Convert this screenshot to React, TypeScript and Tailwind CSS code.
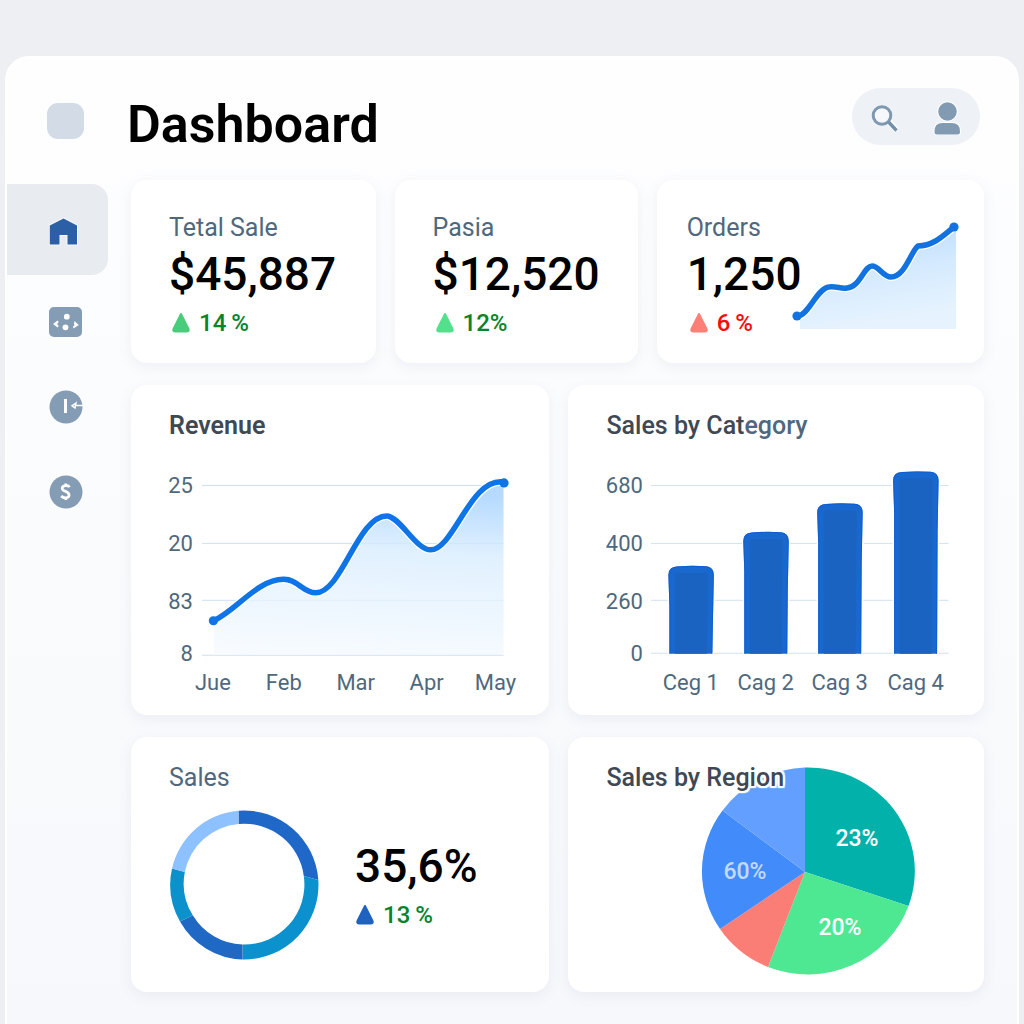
import type { ReactNode } from "react";

const CARD =
  "rounded-2xl bg-white shadow-[0_4px_14px_rgba(100,116,160,0.09)]";

function Triangle({ className }: { className: string }) {
  return (
    <svg viewBox="0 0 20 20" className={"size-5 shrink-0 " + className} aria-hidden="true">
      <path
        d="M10 1 L17.4 15.6 Q18.6 18.5 15.6 18.5 H4.4 Q1.4 18.5 2.6 15.6 Z"
        fill="currentColor"
        stroke="currentColor"
        strokeWidth="2"
        strokeLinejoin="round"
      />
    </svg>
  );
}

function Change({ value, text, marker }: { value: string; text: string; marker: string }) {
  return (
    <p className={"flex items-center gap-2 text-2xl leading-8 font-medium " + text}>
      <Triangle className={marker} />
      {value}
    </p>
  );
}

function Kpi({
  label,
  value,
  change,
  text,
  marker,
  pad,
  children,
}: {
  label: string;
  value: string;
  change: string;
  text: string;
  marker: string;
  pad: string;
  children?: ReactNode;
}) {
  return (
    <section className={CARD + " grid pt-8 pb-6 " + pad}>
      <div className="col-start-1 row-start-1">
        <h2 className="text-[25px] leading-8 text-[#4f687d]">{label}</h2>
        <p className="mt-0.5 text-[46px] leading-[56px] font-medium text-black">{value}</p>
        <div className="mt-[5px] pl-0.5">
          <Change value={change} text={text} marker={marker} />
        </div>
      </div>
      {children}
    </section>
  );
}

function OrdersSpark() {
  const line =
    "M7 96 C17 98 27 68 39 67 C46 66 51 69 57 68 C70 67 74 46 82 46 C89 46 93 57 101 57 C115 57 121 31 128 26 C144 26 155 14 164 7";
  return (
    <svg
      viewBox="0 0 170 110"
      className="col-start-1 row-start-1 mt-2 w-[170px] self-start justify-self-end"
      role="img"
      aria-label="Orders trend"
    >
      <defs>
        <linearGradient id="spark" x1="0" y1="0" x2="0.25" y2="1">
          <stop offset="0" stopColor="#b5d9fe" />
          <stop offset="0.55" stopColor="#d5eafe" />
          <stop offset="1" stopColor="#e6f3fe" />
        </linearGradient>
      </defs>
      <path d={line + " L166 7 V109 H10 V96 Z"} fill="url(#spark)" />
      <path d={line} fill="none" stroke="#fff" strokeWidth="8" />
      <path d={line} fill="none" stroke="#1272df" strokeWidth="5.5" strokeLinecap="round" />
      <circle cx="7" cy="96" r="4.6" fill="#1272df" />
      <circle cx="164" cy="7" r="4.6" fill="#1272df" />
    </svg>
  );
}

const ROWS = [43.5, 101.5, 158.5];

function RevenueChart() {
  const line =
    "M82.5 179 C104 170 127 137 153 137.5 C167 137.5 172 151 185 151 C211 151 227 74 256 74 C269 74 285 108 300 108 C323 108 340 35 373 40";
  const values = ["25", "20", "83", "8"];
  const baselines = [51, 109, 167, 219];
  const months: [string, number][] = [
    ["Jue", 82],
    ["Feb", 153],
    ["Mar", 225],
    ["Apr", 296],
    ["May", 365],
  ];
  return (
    <svg viewBox="0 0 419 273" className="w-full" role="img" aria-label="Revenue by month">
      <defs>
        <linearGradient id="revenue" x1="0.1" y1="0" x2="0" y2="1">
          <stop offset="0" stopColor="#a9d4ff" stopOpacity="0.85" />
          <stop offset="0.35" stopColor="#d9edfe" stopOpacity="0.8" />
          <stop offset="1" stopColor="#f5faff" stopOpacity="0.7" />
        </linearGradient>
      </defs>
      {[...ROWS, 213.5].map((y) => (
        <line key={y} x1="71" x2="373" y1={y} y2={y} stroke="#cfe0ee" />
      ))}
      <path d={line + " V213 H83 Z"} fill="url(#revenue)" />
      <path d={line} fill="none" stroke="#fff" strokeWidth="8" />
      <path d={line} fill="none" stroke="#0f74e5" strokeWidth="5.5" strokeLinecap="round" />
      <circle cx="82.5" cy="179" r="4.6" fill="#0f74e5" />
      <circle cx="373.5" cy="41" r="4.6" fill="#0f74e5" />
      <g className="fill-[#4f687d] text-[22px]">
        {values.map((v, i) => (
          <text key={v} x="62" y={baselines[i]} textAnchor="end">
            {v}
          </text>
        ))}
        {months.map(([m, x]) => (
          <text key={m} x={x} y="248" textAnchor="middle">
            {m}
          </text>
        ))}
      </g>
    </svg>
  );
}

function CategoryChart() {
  const values = ["680", "400", "260", "0"];
  const baselines = [51, 109, 167, 219];
  const bars: [string, number, number][] = [
    ["Ceg 1", 123, 124],
    ["Cag 2", 198, 90],
    ["Cag 3", 272, 61.5],
    ["Cag 4", 348, 29.5],
  ];
  return (
    <svg viewBox="0 0 416 273" className="w-full" role="img" aria-label="Sales by category">
      {[...ROWS, 211.5].map((y) => (
        <line key={y} x1="83" x2="381" y1={y} y2={y} stroke="#d2e2ee" />
      ))}
      {bars.map(([name, x, top]) => (
        <g key={name} transform={`translate(${x} ${top})`}>
          <path
            d={`M-21.5 ${212 - top} L-21.5 40 L-22.5 9 Q-22.5 1 -14 0.6 Q0 -0.6 15 0.3 Q23 1 23 9 L22 60 L21.5 ${212 - top} Z`}
            fill="#1868cf"
            stroke="#fff"
            strokeWidth="3"
            paintOrder="stroke"
          />
          <path
            d={`M-21 ${212 - top} L-21 40 L-22 9 Q-22 1.5 -14 1.1 Q0 -0.1 15 0.8 Q22.5 1.5 22.5 9 L21.5 60 L21 ${212 - top}`}
            fill="none"
            stroke="#0d5bd0"
            strokeWidth="0.8"
          />
          <path d={`M-16 ${212 - top} V9 Q-16 7 -14 7 H15 Q17 7 17 9 L16 ${212 - top} Z`} fill="#1b63c0" />
        </g>
      ))}
      <g className="fill-[#4f687d] text-[22px]">
        {values.map((v, i) => (
          <text key={v} x="75" y={baselines[i]} textAnchor="end">
            {v}
          </text>
        ))}
        {bars.map(([name, x]) => (
          <text key={name} x={x} y="248" textAnchor="middle">
            {name}
          </text>
        ))}
      </g>
    </svg>
  );
}

function Donut() {
  return (
    <svg viewBox="0 0 150 150" className="w-[150px] shrink-0" role="img" aria-label="Sales share">
      <path d="M69.5 0.7 A74.5 74.5 0 0 1 149.3 70 L134.8 66 A60 60 0 0 0 69.5 14 Z" fill="#1f68c8" />
      <path d="M149.3 70 A74.5 74.5 0 0 1 73.5 149.5 V134.5 A60 60 0 0 0 134.8 66 Z" fill="#0b91cd" />
      <path d="M73.5 149.5 A74.5 74.5 0 0 1 11 111.5 L23.8 105.3 A60 60 0 0 0 73.5 134.5 Z" fill="#1f68c4" />
      <path d="M11 111.5 A74.5 74.5 0 0 1 3 58.5 L15.8 62 A60 60 0 0 0 23.8 105.3 Z" fill="#0b91cb" />
      <path d="M3 58.5 A74.5 74.5 0 0 1 69.5 0.7 V14 A60 60 0 0 0 15.8 62 Z" fill="#8dc1ff" />
    </svg>
  );
}

function Pie() {
  return (
    <svg
      viewBox="0 0 214 208"
      className="col-start-1 row-start-1 mt-[5px] w-[214px] self-start justify-self-end"
      role="img"
      aria-label="Sales by region"
    >
      <path d="M104 105 V0.5 A107 103.5 0 0 1 207.5 139 Z" fill="#02b2aa" />
      <path d="M104 105 L207.5 139 A107 103.5 0 0 1 67 200 Z" fill="#4fe892" />
      <path d="M104 105 L67 200 A107 103.5 0 0 1 19 162 Z" fill="#fb7e76" />
      <path d="M104 105 L19 162 A107 103.5 0 0 1 21.5 43.5 Z" fill="#418bfb" />
      <path d="M104 105 L21.5 43.5 A107 103.5 0 0 1 104 0.5 Z" fill="#629ffe" />
      <g className="text-[23px] font-medium" textAnchor="middle">
        <text x="156" y="79" fill="#fff">23%</text>
        <text x="139" y="168" fill="#fff">20%</text>
        <text x="44" y="112" fill="#c3d9fd">60%</text>
      </g>
    </svg>
  );
}

function HomeIcon() {
  return (
    <svg viewBox="0 0 34 34" className="size-[34px]" aria-hidden="true">
      <path
        d="M14.5 5.5 L28 12.5 V31.5 H18.5 V22 H10.5 V31.5 H0.8 V12.5 Z"
        fill="#2b60a6"
        stroke="#f8fafc"
        strokeWidth="2"
        paintOrder="stroke"
      />
    </svg>
  );
}

function GridIcon() {
  return (
    <svg viewBox="0 0 34 34" className="size-[34px]" aria-hidden="true">
      <rect y="2" width="33" height="30" rx="5" fill="#859db4" />
      <g fill="#fff">
        <circle cx="17.8" cy="11.7" r="2.9" />
        <circle cx="16.5" cy="22.3" r="2.9" />
        <path d="M8.5 15.5 L4 19 L8.5 22.5 L9.8 21 L8 19 L9.8 17 Z" />
        <path d="M25.5 16 L29.8 20 L24.5 23.5 L24 21.5 L25.5 20.5 L25 19 Z" />
      </g>
    </svg>
  );
}

function ClockIcon() {
  return (
    <svg viewBox="0 0 34 34" className="size-[34px]" aria-hidden="true">
      <circle cx="17" cy="17" r="16.5" fill="#859db4" />
      <path d="M16.5 9 V23" stroke="#fff" strokeWidth="3" fill="none" />
      <path d="M27 15.5 H34 M27 13 L23 15.8 L26 18 Z" stroke="#fff" strokeWidth="1.5" fill="none" />
    </svg>
  );
}

function DollarIcon() {
  return (
    <svg viewBox="0 0 34 34" className="size-[34px]" aria-hidden="true">
      <circle cx="17" cy="17" r="16.5" fill="#859db4" />
      <path
        d="M20.5 12.2 C19.5 10 13.2 10 13.2 13.4 C13.2 16.6 20.3 16 20.1 20.2 C19.9 23.6 14.4 23.4 12.2 21 M16.8 8.5 V11 M16.8 22.5 V25"
        stroke="#fff"
        strokeWidth="2.7"
        fill="none"
      />
    </svg>
  );
}

const LINKS: [string, () => ReactNode][] = [
  ["Grid", GridIcon],
  ["Activity", ClockIcon],
  ["Payments", DollarIcon],
];

export default function App() {
  return (
    <div className="flex min-h-screen flex-col bg-[#eeeff2] px-[5px] pt-14 font-[Roboto,sans-serif]">
      <div className="flex flex-1 rounded-t-3xl border-2 border-b-0 border-white bg-linear-to-b from-[#fefeff] to-[#f6f8fb]">
        <aside className="w-[101px] shrink-0 pt-[45px]">
          <div className="ml-10 h-9 w-[37px] rounded-[11px] bg-[#d3dce6]" />
          <nav className="mt-[45px] flex flex-col">
            <a
              href="#home"
              aria-label="Home"
              aria-current="page"
              className="mb-1 flex h-[91px] items-center rounded-r-2xl bg-[#e8ecf1] pl-[42px]"
            >
              <HomeIcon />
            </a>
            {LINKS.map(([name, Icon]) => (
              <a key={name} href={"#" + name.toLowerCase()} aria-label={name} className="flex h-[85px] items-center pl-[42px]">
                <Icon />
              </a>
            ))}
          </nav>
        </aside>

        <main className="ml-[23px] min-w-0 flex-1 pt-[30px] pr-[33px] pb-8">
          <header className="flex items-start justify-between pb-6">
            <h1 className="mt-1 -ml-1 text-[52px] leading-[66px] font-semibold text-black">Dashboard</h1>
            <div className="mr-1 flex h-[57px] items-center rounded-full bg-[#eef1f6]">
              <button type="button" aria-label="Search" className="flex h-full w-16 items-center justify-center">
                <svg viewBox="0 0 32 32" className="size-8" aria-hidden="true">
                  <path d="M21 21 L28.5 29" stroke="#fff" strokeWidth="6" />
                  <circle cx="14" cy="14.5" r="8.8" fill="#f5f7fa" stroke="#7d98b0" strokeWidth="3" />
                  <path d="M20.5 21 L28.5 29.5" stroke="#7390aa" strokeWidth="3.4" />
                </svg>
              </button>
              <button type="button" aria-label="Account" className="flex h-full w-16 items-center justify-center">
                <svg viewBox="0 0 32 36" className="h-9 w-8" aria-hidden="true">
                  <g fill="#839bb2" stroke="#fff" strokeWidth="2" paintOrder="stroke">
                    <circle cx="15.5" cy="12.5" r="9.3" />
                    <path d="M2.5 33 Q2 24 10.5 24 H19.5 Q28.5 24 28 33 Q28 35.5 25.5 35.5 H5 Q2.5 35.5 2.5 33 Z" />
                  </g>
                </svg>
              </button>
            </div>
          </header>

          <div className="-mt-0.5 flex flex-col gap-[22px]">
            <div className="grid grid-cols-[245fr_242fr_328fr] gap-[19px]">
              <Kpi label="Tetal Sale" value="$45,887" change={"14\u2009%"} text="text-[#08842c]" marker="text-[#49cc7c]" pad="px-[38px]" />
              <Kpi label="Pasia" value="$12,520" change="12%" text="text-[#08842c]" marker="text-[#52e08c]" pad="px-[38px]" />
              <Kpi label="Orders" value="1,250" change={"6\u2009%"} text="text-[#fa0a0a]" marker="text-[#fd7f76]" pad="pl-[30px] pr-6">
                <OrdersSpark />
              </Kpi>
            </div>

            <div className="grid grid-cols-[419fr_416fr] gap-x-[19px] gap-y-[22px]">
              <section className={CARD + " flex flex-col pt-[25px]"}>
                <h2 className="px-[38px] text-[25px] leading-8 font-semibold text-[#3f4853]">Revenue</h2>
                <RevenueChart />
              </section>
              <section className={CARD + " flex flex-col pt-[25px]"}>
                <h2 className="px-[38px] text-[25px] leading-8 font-medium text-[#3f4853]">
                  Sales by Cat<span className="text-[#4f687d]">egory</span>
                </h2>
                <CategoryChart />
              </section>
              <section className={CARD + " px-[38px] pt-[25px] pb-8"}>
                <h2 className="text-[25px] leading-8 text-[#4f687d]">Sales</h2>
                <div className="mt-4 flex items-center gap-9">
                  <Donut />
                  <div>
                    <p className="text-[46px] leading-[56px] font-medium text-black">35,6%</p>
                    <div className="mt-[5px]">
                      <Change value={"13\u2009%"} text="text-[#08842c]" marker="text-[#1f62bf]" />
                    </div>
                  </div>
                </div>
              </section>
              <section className={CARD + " grid pt-[25px] pr-[69px] pb-4 pl-[38px]"}>
                <h2 className="z-10 col-start-1 row-start-1 text-[25px] leading-8 font-medium text-[#3f4853] [text-shadow:2px_0_1px_#fff,-2px_0_1px_#fff,0_2px_1px_#fff,0_-2px_1px_#fff,2px_2px_1px_#fff,-2px_2px_1px_#fff,2px_-2px_1px_#fff,-2px_-2px_1px_#fff]">
                  Sales by Region
                </h2>
                <Pie />
              </section>
            </div>
          </div>
        </main>
      </div>
    </div>
  );
}
